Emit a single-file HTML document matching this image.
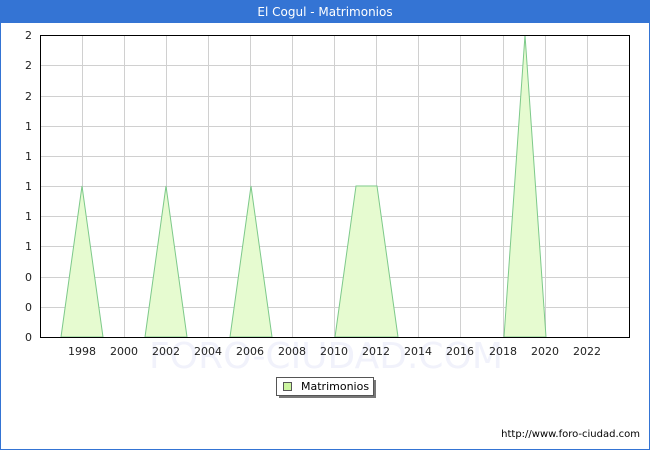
<!DOCTYPE html><html><head><style>
body{margin:0;width:650px;height:450px;overflow:hidden;font-family:"DejaVu Sans","Liberation Sans",sans-serif;}
</style></head><body>
<svg width="650" height="450" xmlns="http://www.w3.org/2000/svg" font-family="DejaVu Sans, Liberation Sans, sans-serif">
<rect x="0" y="0" width="650" height="450" fill="#3474d4"/>
<rect x="1" y="23" width="648" height="426" fill="#fff"/>
<text x="325" y="16" fill="#fff" font-size="12" text-anchor="middle">El Cogul - Matrimonios</text>
<text x="326" y="368" font-size="36" fill="#f1f2fb" text-anchor="middle">FORO-CIUDAD.COM</text>
<g stroke="#d0d0d0" stroke-width="1">
<line x1="40" y1="65.5" x2="630" y2="65.5"/><line x1="40" y1="96.5" x2="630" y2="96.5"/><line x1="40" y1="126.5" x2="630" y2="126.5"/><line x1="40" y1="156.5" x2="630" y2="156.5"/><line x1="40" y1="186.5" x2="630" y2="186.5"/><line x1="40" y1="216.5" x2="630" y2="216.5"/><line x1="40" y1="246.5" x2="630" y2="246.5"/><line x1="40" y1="277.5" x2="630" y2="277.5"/><line x1="40" y1="307.5" x2="630" y2="307.5"/>
<line x1="82.5" y1="35" x2="82.5" y2="338"/><line x1="124.5" y1="35" x2="124.5" y2="338"/><line x1="166.5" y1="35" x2="166.5" y2="338"/><line x1="208.5" y1="35" x2="208.5" y2="338"/><line x1="250.5" y1="35" x2="250.5" y2="338"/><line x1="292.5" y1="35" x2="292.5" y2="338"/><line x1="334.5" y1="35" x2="334.5" y2="338"/><line x1="376.5" y1="35" x2="376.5" y2="338"/><line x1="418.5" y1="35" x2="418.5" y2="338"/><line x1="460.5" y1="35" x2="460.5" y2="338"/><line x1="503.5" y1="35" x2="503.5" y2="338"/><line x1="545.5" y1="35" x2="545.5" y2="338"/><line x1="587.5" y1="35" x2="587.5" y2="338"/>
</g>
<g fill="#e6fbd0" stroke="#7dc98a" stroke-width="1">
<polygon points="61,337 82,186 103,337"/>
<polygon points="145,337 166,186 187,337"/>
<polygon points="230,337 251,186 272,337"/>
<polygon points="335,337 356,186 377,186 398,337"/>
<polygon points="504,337 525,35 546,337"/>
</g>
<rect x="40.5" y="35.5" width="589" height="302" fill="none" stroke="#000" stroke-width="1"/>
<g font-size="11" fill="#222" text-anchor="end">
<text x="32" y="39">2</text><text x="32" y="69">2</text><text x="32" y="100">2</text><text x="32" y="130">1</text><text x="32" y="160">1</text><text x="32" y="190">1</text><text x="32" y="220">1</text><text x="32" y="250">1</text><text x="32" y="281">0</text><text x="32" y="311">0</text><text x="32" y="341">0</text>
</g>
<g font-size="11" fill="#222" text-anchor="middle">
<text x="82" y="355">1998</text><text x="124" y="355">2000</text><text x="166" y="355">2002</text><text x="208" y="355">2004</text><text x="250" y="355">2006</text><text x="292" y="355">2008</text><text x="334" y="355">2010</text><text x="376" y="355">2012</text><text x="418" y="355">2014</text><text x="460" y="355">2016</text><text x="503" y="355">2018</text><text x="545" y="355">2020</text><text x="587" y="355">2022</text>
</g>
<rect x="279" y="380" width="97" height="18" fill="#777"/>
<rect x="276.5" y="377.5" width="97" height="18" fill="#fff" stroke="#555"/>
<rect x="283.5" y="382.5" width="8" height="8" fill="#ccf5a0" stroke="#555"/>
<text x="301" y="390" font-size="11" fill="#000">Matrimonios</text>
<text x="640" y="437" font-size="10" fill="#000" text-anchor="end">http://www.foro-ciudad.com</text>
</svg>
</body></html>
